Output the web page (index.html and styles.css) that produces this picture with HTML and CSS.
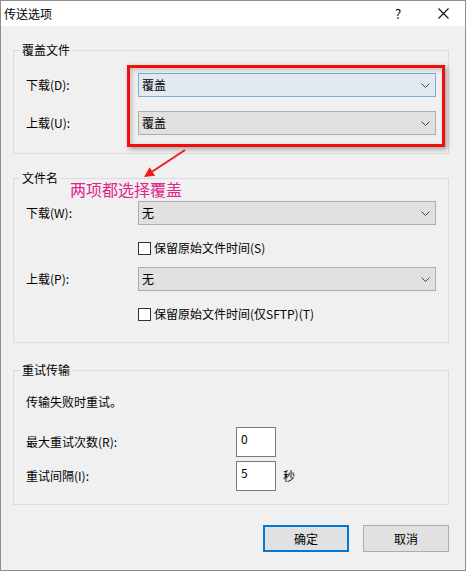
FILE: index.html
```html
<!DOCTYPE html>
<html lang="zh-CN">
<head>
	<meta charset="UTF-8">
	<title>传送选项</title>
	<link rel="stylesheet" href="styles.css">
</head>
<body>
	<div class="dialog">
		<div class="titlebar">
			<span class="title">传送选项</span>
			<span class="help">?</span>
			<span class="close">
				<svg width="11" height="11" viewBox="0 0 11 11"><path d="M0.5 0.5L10.5 10.5M10.5 0.5L0.5 10.5" stroke="#111" stroke-width="1.1" fill="none"/></svg>
			</span>
		</div>
		<div class="content">
			<fieldset class="group">
				<legend>覆盖文件</legend>
				<div class="rows rows-overwrite">
					<div class="field">
						<label>下载(D):</label>
						<div class="combo hot"><span>覆盖</span><svg class="chev" width="9" height="5" viewBox="0 0 9 5"><path d="M0.5 0.5L4.5 4.5L8.5 0.5" stroke="#444" fill="none"/></svg></div>
					</div>
					<div class="field">
						<label>上载(U):</label>
						<div class="combo"><span>覆盖</span><svg class="chev" width="9" height="5" viewBox="0 0 9 5"><path d="M0.5 0.5L4.5 4.5L8.5 0.5" stroke="#444" fill="none"/></svg></div>
					</div>
				</div>
			</fieldset>

			<fieldset class="group group-names">
				<legend>文件名</legend>
				<div class="rows rows-names">
					<div class="field">
						<label>下载(W):</label>
						<div class="combo"><span>无</span><svg class="chev" width="9" height="5" viewBox="0 0 9 5"><path d="M0.5 0.5L4.5 4.5L8.5 0.5" stroke="#444" fill="none"/></svg></div>
					</div>
					<div class="check"><span class="box"></span>保留原始文件时间(S)</div>
					<div class="field">
						<label>上载(P):</label>
						<div class="combo"><span>无</span><svg class="chev" width="9" height="5" viewBox="0 0 9 5"><path d="M0.5 0.5L4.5 4.5L8.5 0.5" stroke="#444" fill="none"/></svg></div>
					</div>
					<div class="check"><span class="box"></span>保留原始文件时间(仅SFTP)(T)</div>
				</div>
			</fieldset>

			<fieldset class="group group-retry">
				<legend>重试传输</legend>
				<div class="rows rows-retry">
					<p class="note">传输失败时重试。</p>
					<div class="num-field">
						<label>最大重试次数(R):</label>
						<div class="num">0</div>
					</div>
					<div class="num-field">
						<label>重试间隔(I):</label>
						<div class="num">5</div>
						<span class="unit">秒</span>
					</div>
				</div>
			</fieldset>

			<div class="buttons">
				<div class="btn default">确定</div>
				<div class="btn">取消</div>
			</div>
		</div>

		<!-- 标注 -->
		<div class="mark"></div>
		<svg class="arrow" width="50" height="36" viewBox="0 0 50 36">
			<line x1="45" y1="5" x2="12.4" y2="26.5" stroke="#ee1d1d" stroke-width="2"/>
			<polygon points="4,32 15.1,30.7 9.6,22.3" fill="#ee1d1d"/>
		</svg>
		<div class="note-pink">两项都选择覆盖</div>
	</div>
</body>
</html>
```

FILE: styles.css
```css
*{
	margin:0;
	padding:0;
	box-sizing:border-box;
}
body{
	font-family:"Noto Sans CJK SC", sans-serif;
	font-size:12px;
	line-height:16px;
	color:#000;
	background:#fff;
}
.dialog{
	width:466px;
	height:571px;
	border:1px solid #8e8e8e;
	background:#f0f0f0;
	position:relative;
}
.titlebar{
	height:25px;
	background:#fff;
	display:flex;
	align-items:center;
	padding-left:3px;
}
.title{
	flex:1;
	font-size:12px;
}
.help{
	width:12px;
	text-align:center;
	font-size:13px;
	margin-right:34px;
}
.close{
	display:flex;
	margin-right:16px;
}
.content{
	padding:16px 16px 0 12px;
}
.group{
	border:1px solid #dcdcdc;
	min-width:0;
}
.group legend{
	margin-left:6px;
	padding:0 2px;
	line-height:16px;
}
.group-names{
	margin-top:16px;
}
.group-retry{
	margin-top:19px;
}
.rows{
	padding:15px 12px 18px 12px;
}
.rows-overwrite{
	display:flex;
	flex-direction:column;
	gap:14px;
}
.field{
	display:flex;
	align-items:center;
}
.field label{
	width:112px;
}
.combo{
	flex:1;
	height:24px;
	border:1px solid #adadad;
	background:#e1e1e1;
	display:flex;
	align-items:center;
	padding:0 4px 0 3px;
}
.combo span{
	flex:1;
}
.combo.hot{
	background:#e3e9f0;
	border-color:#7eaad6;
}
.chev{
	margin-right:1px;
}
.check{
	display:flex;
	align-items:center;
	height:20px;
	margin:13px 0 9px 112px;
}
.check:last-child{
	margin-bottom:0;
}
.box{
	width:13px;
	height:13px;
	border:1px solid #333;
	background:#fff;
	margin-right:3px;
}
.rows-retry{
	padding:16px 12px 13px 12px;
}
.note{
	margin-bottom:17px;
}
.num-field{
	display:flex;
	align-items:center;
	margin-bottom:4px;
}
.num-field:last-child{
	margin-bottom:0;
}
.num-field label{
	width:210px;
}
.num{
	width:40px;
	height:30px;
	border:1px solid #7a7a7a;
	background:#fff;
	padding:3px 0 0 4px;
}
.unit{
	margin-left:7px;
}
.buttons{
	display:flex;
	justify-content:flex-end;
	gap:14px;
	margin-top:20px;
}
.btn{
	width:86px;
	height:27px;
	border:1px solid #adadad;
	background:#e1e1e1;
	display:flex;
	align-items:center;
	justify-content:center;
}
.btn.default{
	border:2px solid #0078d7;
}
.mark{
	position:absolute;
	left:126px;
	top:64px;
	width:318px;
	height:82px;
	border:3px solid #f30d0d;
	box-shadow:2px 2px 5px rgba(0,0,0,.35), inset 2px 2px 5px rgba(0,0,0,.2);
}
.arrow{
	position:absolute;
	left:139px;
	top:144px;
}
.note-pink{
	position:absolute;
	left:69px;
	top:178px;
	font-size:16px;
	line-height:20px;
	color:#e2238c;
}
```
